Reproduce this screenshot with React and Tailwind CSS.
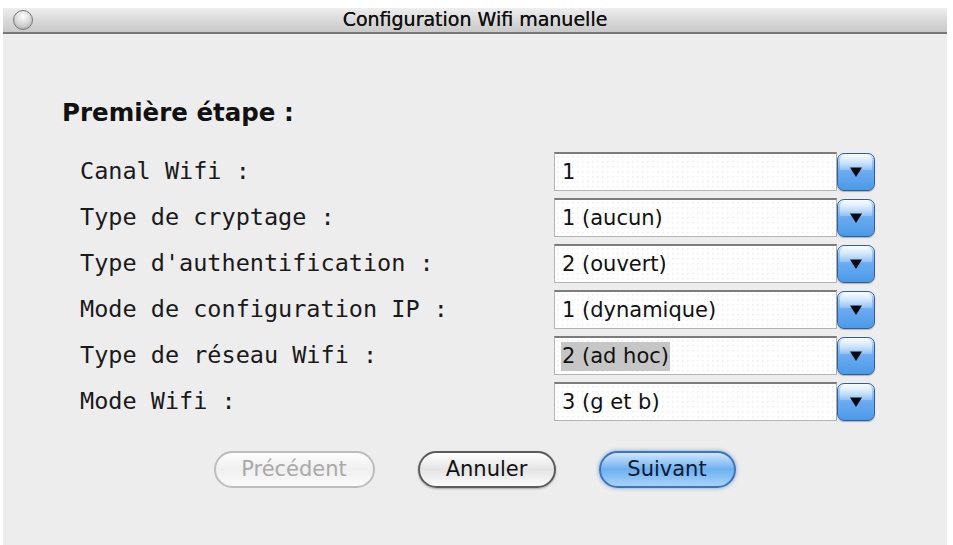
// Assistant Wifi — première étape de la configuration manuelle
import { useState } from 'react';

const champs = [
  { label: 'Canal Wifi :',                valeur: '1' },
  { label: 'Type de cryptage :',          valeur: '1 (aucun)' },
  { label: "Type d'authentification :",   valeur: '2 (ouvert)' },
  { label: 'Mode de configuration IP :',  valeur: '1 (dynamique)' },
  { label: 'Type de réseau Wifi :',       valeur: '2 (ad hoc)', selection: true },
  { label: 'Mode Wifi :',                 valeur: '3 (g et b)' },
];

const police = "font-['DejaVu_Sans','Noto_Sans',sans-serif]";

// Bouton bleu à flèche du menu déroulant
function FlecheMenu() {
  return (
    <div className="relative w-[38px] h-[38px] rounded-[7px] border border-[#2f5f9a] bg-linear-to-b from-[#b9dcfb] via-[#6aaaf0] to-[#4a9ae8] shadow-[inset_0_1px_0_rgba(255,255,255,0.9),0_1px_1px_rgba(0,0,0,0.25)] flex items-center justify-center overflow-hidden">
      {/* reflet du haut */}
      <div className="absolute inset-x-[2px] top-[1px] h-[15px] rounded-t-[5px] bg-linear-to-b from-[rgba(255,255,255,0.85)] to-[rgba(255,255,255,0.2)]" />
      <svg width="14" height="12" viewBox="0 0 14 12" className="relative">
        <path d="M1 1.5 H13 L7 11 Z" fill="#0a0a14" />
      </svg>
    </div>
  );
}

function Menu({ valeur, selection }) {
  return (
    <div className="flex items-center w-[321px] h-[39px]">
      <div className="flex-1 h-[39px] flex items-center pl-[6px] bg-white bg-[radial-gradient(#f1f1f1_1px,transparent_1px)] bg-[length:5px_5px] border border-[#b4b4b4] border-t-[#7c7c7c] border-t-2">
        <span className={`${police} text-[21px] leading-[29px] text-[#111] px-px ${selection ? 'bg-[#c6c6c6]' : ''}`}>
          {valeur}
        </span>
      </div>
      <FlecheMenu />
    </div>
  );
}

function Bouton({ children, variante }) {
  const styles = {
    inactif: 'w-[161px] border-[#bdbdbd] text-[#a9a9a9] bg-linear-to-b from-[#fdfdfd] via-[#f0f0f0] to-[#fafafa]',
    normal:  'w-[138px] border-[#5c5c5c] text-[#111] bg-linear-to-b from-[#ffffff] via-[#e4e4e4] to-[#fbfbfb] shadow-[0_1px_2px_rgba(0,0,0,0.3)]',
    defaut:  'w-[137px] border-[#3c74b8] text-[#0d1a33] bg-linear-to-b from-[#cfe6fc] via-[#6eb0f0] to-[#a8d3fa] shadow-[0_0_4px_rgba(40,110,200,0.6)]',
  };
  return (
    <button className={`${police} h-[37px] rounded-full border-2 text-[21px] leading-none ${styles[variante]}`}>
      {children}
    </button>
  );
}

export default function App() {
  const [valeurs] = useState(champs);

  return (
    <div className="w-[953px] h-[545px] bg-white pt-[8px] pl-[3px] pr-[6px] overflow-hidden">
      <div className="h-full flex flex-col bg-[#ededed]">

        {/* Barre de titre */}
        <div className="h-[26px] shrink-0 grid grid-cols-[40px_1fr_40px] items-center bg-linear-to-b from-[#eeeeee] via-[#dadada] to-[#c9c9c9] border-b-2 border-[#777]">
          <div className="ml-[10px] w-[20px] h-[20px] rounded-full border border-[#777] bg-[radial-gradient(circle_at_50%_30%,#ffffff,#d0d0d0_60%,#9a9a9a)]" />
          <p className={`${police} text-center text-[19px] leading-none text-[#111] -mt-[2px] [text-shadow:0_0_0.4px_#111]`}>
            Configuration Wifi manuelle
          </p>
          <div />
        </div>

        {/* Contenu */}
        <div className="flex flex-col pt-[64px]">
          <h1 className={`${police} pl-[59px] text-[24.5px] leading-[30px] font-bold text-[#111]`}>
            Première étape :
          </h1>

          <div className="mt-[24px] pl-[77px] flex flex-col gap-[7px]">
            {valeurs.map((c) => (
              <div key={c.label} className="flex items-center">
                <span className="w-[474px] font-['DejaVu_Sans_Mono','Liberation_Mono',monospace] text-[23.5px] leading-none text-[#1a1a1a]">
                  {c.label}
                </span>
                <Menu valeur={c.valeur} selection={c.selection} />
              </div>
            ))}
          </div>

          <div className="mt-[30px] flex justify-center gap-[43px] pr-[1px]">
            <Bouton variante="inactif">Précédent</Bouton>
            <Bouton variante="normal">Annuler</Bouton>
            <Bouton variante="defaut">Suivant</Bouton>
          </div>
        </div>
      </div>
    </div>
  );
}
